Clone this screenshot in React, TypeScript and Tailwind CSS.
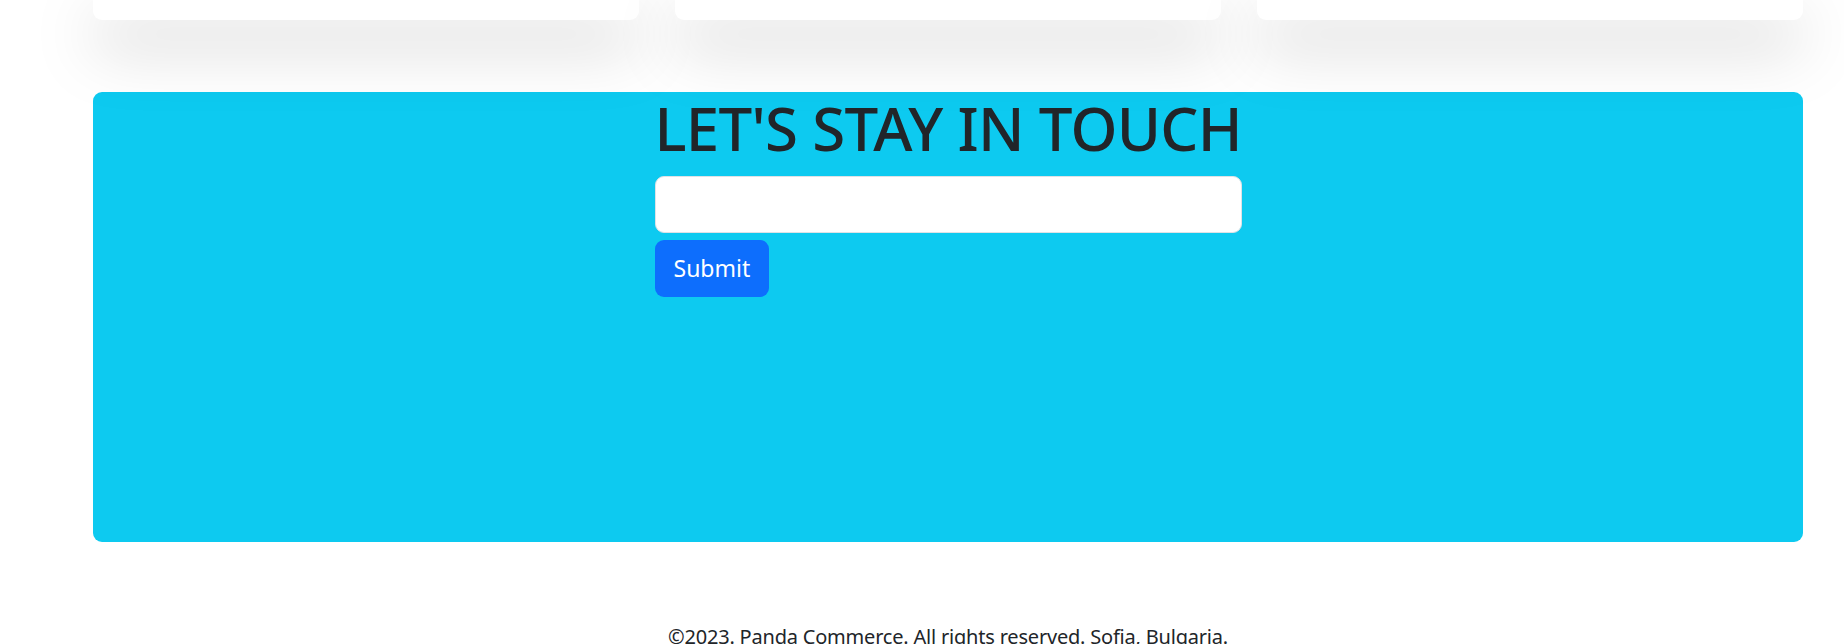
const cards = [1, 2, 3];

export default function App() {
  return (
    <div className="min-h-[644px] bg-white text-[#212529] font-['Noto_Sans',sans-serif] overflow-hidden">
      <div className="ml-[93px] mr-[41px] flex gap-[36px]">
        {cards.map((c) => (
          <div
            key={c}
            className="h-[20px] flex-1 rounded-b-[9px] bg-white shadow-[0_24px_64px_rgba(0,0,0,0.26)]"
          />
        ))}
      </div>

      <section className="ml-[93px] mr-[41px] mt-[72px] h-[450px] rounded-[9px] bg-[#0dcaf0]">
        <div className="mx-auto w-[587px]">
          <h1 className="mb-[12px] text-[60px] leading-[72px] font-medium tracking-[-0.012em] whitespace-nowrap">
            LET'S STAY IN TOUCH
          </h1>
          <input
            type="text"
            className="block h-[57px] w-full rounded-[9px] border border-[#dee2e6] bg-white px-[18px] text-[24px] outline-none"
          />
          <button className="mt-[7px] h-[57px] rounded-[9px] bg-[#0d6efd] px-[19px] text-[23px] text-white">
            Submit
          </button>
        </div>
      </section>

      <footer className="ml-[93px] mr-[41px] mt-[80px] text-center text-[20px] leading-[30px] tracking-[-0.01em]">
        ©2023. Panda Commerce. All rights reserved. Sofia, Bulgaria.
      </footer>
    </div>
  );
}
